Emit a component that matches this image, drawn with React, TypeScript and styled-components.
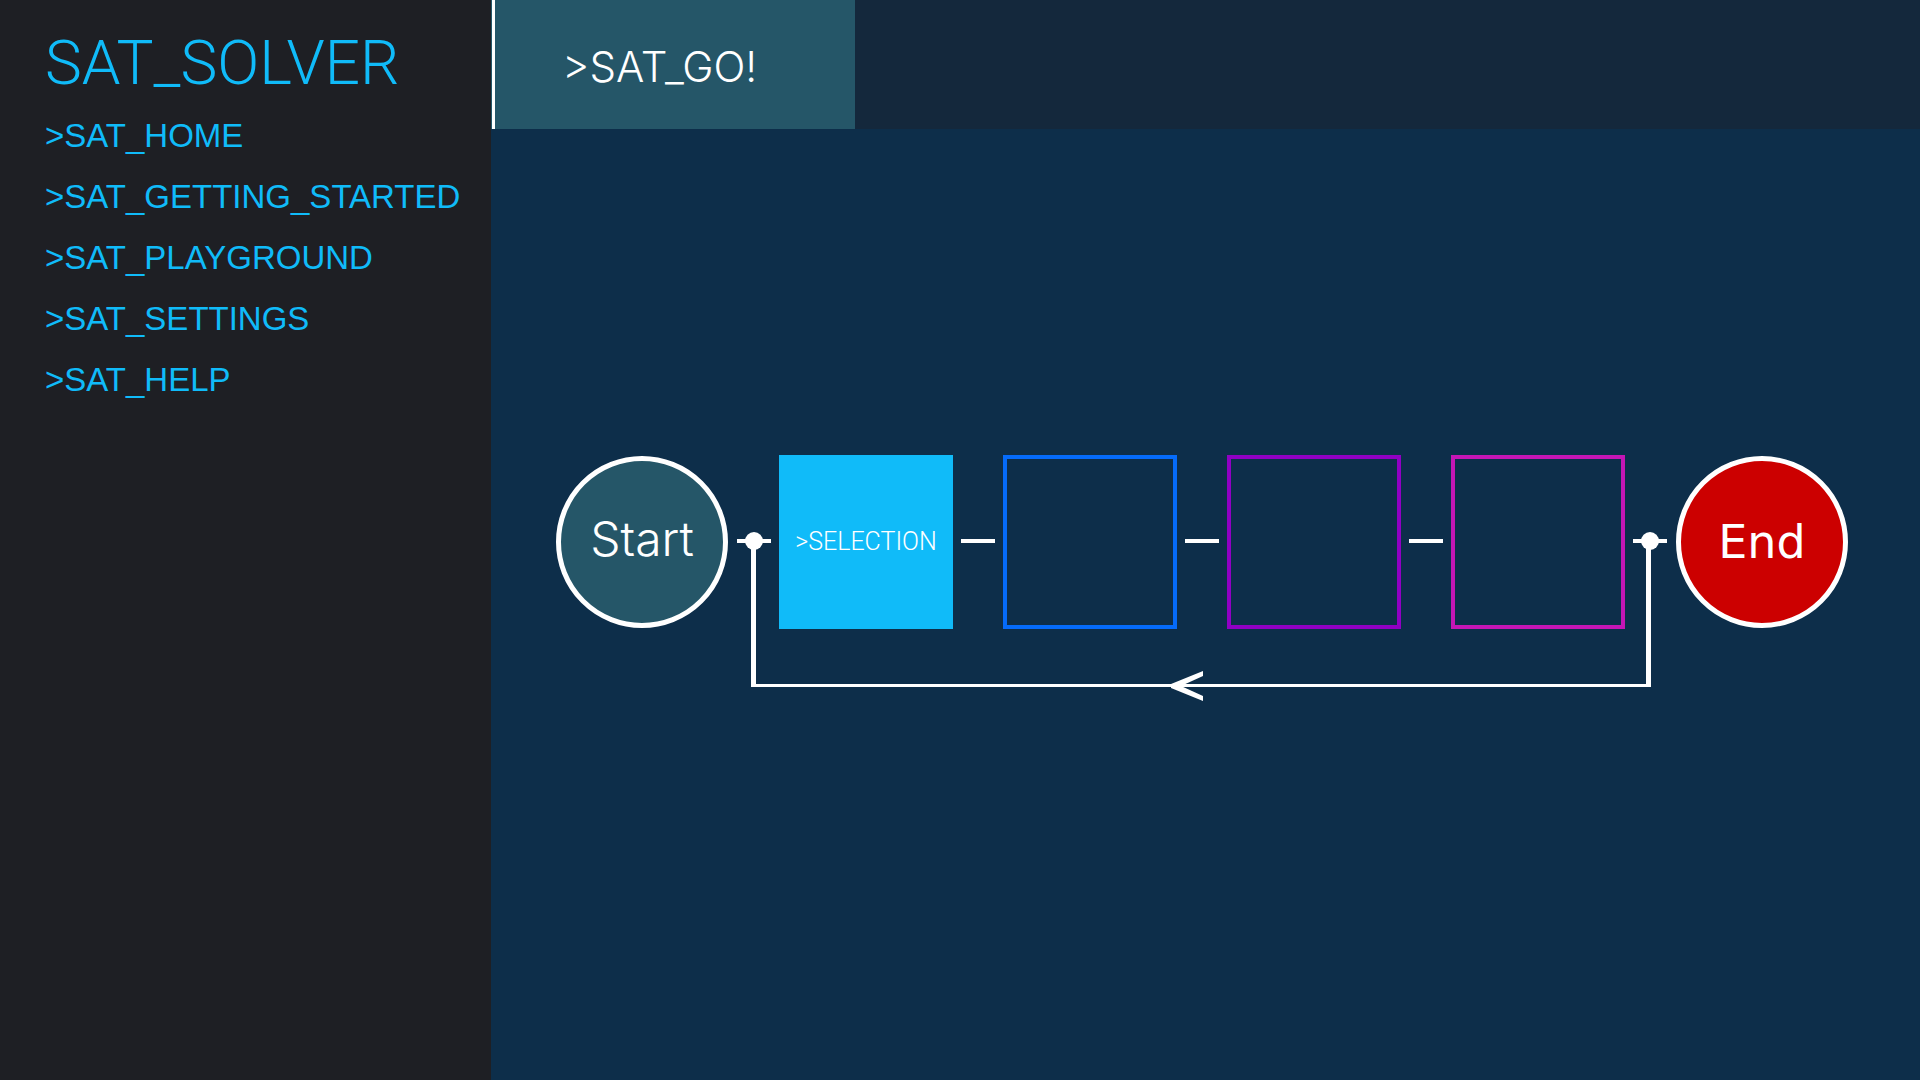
import React from "react";
import styled, { createGlobalStyle } from "styled-components";

const colors = {
  sidebar: "#1e1f24",
  header: "#14283c",
  canvas: "#0d2e4a",
  teal: "#255668",
  cyan: "#10bbf9",
  blue: "#056bfa",
  purple: "#9000c4",
  magenta: "#c516b5",
  red: "#cc0000",
  white: "#ffffff",
};

const GlobalStyle = createGlobalStyle`
  *, *::before, *::after { box-sizing: border-box; }
  body { margin: 0; background: ${colors.canvas}; }
  button { font: inherit; color: inherit; padding: 0; cursor: pointer; }
`;

const Page = styled.div`
  display: grid;
  grid-template-columns: 491px 1fr;
  min-height: 100vh;
  font-family: Roboto, "Liberation Sans", sans-serif;
  font-weight: 300;
`;

const Sidebar = styled.aside`
  background: ${colors.sidebar};
  color: ${colors.cyan};
  padding: 27px 0 0 45px;
`;

const Brand = styled.h1`
  margin: 0;
  font-size: 62px;
  line-height: 72px;
  font-weight: 300;
`;

const NavList = styled.ul`
  list-style: none;
  margin: 19px 0 0;
  padding: 0;
  display: flex;
  flex-direction: column;
  gap: 25px;
`;

const NavLink = styled.a`
  display: block;
  color: inherit;
  text-decoration: none;
  font-family: "Liberation Sans", Arial, sans-serif;
  font-size: 33px;
  line-height: 36px;
  white-space: nowrap;
`;

const Workspace = styled.main`
  display: flex;
  flex-direction: column;
  min-width: 0;
`;

const TabBar = styled.header`
  display: flex;
  height: 129px;
  background: ${colors.header};
`;

const Tab = styled.button`
  border: 0;
  border-left: 1px solid ${colors.teal};
  box-shadow: inset 3px 0 ${colors.white};
  background: ${colors.teal};
  color: ${colors.white};
  width: 364px;
  padding: 4px 0 0 70px;
  text-align: left;
  font-family: Inter, "Liberation Sans", sans-serif;
  font-size: 42px;
  line-height: 48px;
`;

const Canvas = styled.section`
  flex: 1;
  display: flex;
  justify-content: center;
  align-items: flex-start;
  padding: 326px 71px 0 64px;
`;

const Diagram = styled.div`
  display: grid;
  color: ${colors.white};
`;

const Steps = styled.div`
  grid-area: 1 / 1;
  display: flex;
  align-items: center;
  gap: 8px;
  height: 174px;
`;

const Slot = styled.button<{ $color: string; $filled?: boolean }>`
  width: 174px;
  height: 174px;
  border: 4px solid ${(p) => p.$color};
  background: ${(p) => (p.$filled ? p.$color : "transparent")};
  font-size: 25px;
  line-height: 28px;
`;

const Terminal = styled.button<{ $color: string }>`
  width: 172px;
  height: 172px;
  margin: 0 1px;
  border: 5px solid ${colors.white};
  border-radius: 50%;
  background: ${(p) => p.$color};
  line-height: 56px;
`;

const StartTerminal = styled(Terminal)`
  font-family: Inter, "Liberation Sans", sans-serif;
  font-size: 48px;
  padding-bottom: 6px;
`;

const EndTerminal = styled(Terminal)`
  font-family: "DejaVu Sans", Verdana, sans-serif;
  font-size: 46px;
  font-weight: 400;
`;

const Connector = styled.div`
  display: flex;
  align-items: center;
  justify-content: center;
  width: 34px;
  height: 4px;
  margin-bottom: 2px;
  background: ${colors.white};
`;

const Dot = styled.span`
  flex: none;
  width: 18px;
  height: 18px;
  border-radius: 50%;
  background: ${colors.white};
`;

const Loop = styled.div`
  grid-area: 1 / 1;
  position: relative;
  height: 146px;
  margin: 86px 198px 0 196px;
  border: solid ${colors.white};
  border-width: 0 5px 3px;
  pointer-events: none;
`;

const Arrow = styled.svg`
  position: absolute;
  left: 415px;
  bottom: -17px;
`;

const links = ["HOME", "GETTING_STARTED", "PLAYGROUND", "SETTINGS", "HELP"];

const slots = [
  { color: colors.cyan, name: "Selection", label: ">SELECTION" },
  { color: colors.blue, name: "Empty slot 2", label: "" },
  { color: colors.purple, name: "Empty slot 3", label: "" },
  { color: colors.magenta, name: "Empty slot 4", label: "" },
];

export default function App() {
  return (
    <>
      <GlobalStyle />
      <Page>
        <Sidebar>
          <Brand>SAT_SOLVER</Brand>
          <nav>
            <NavList>
              {links.map((name) => (
                <li key={name}>
                  <NavLink href={`#${name.toLowerCase()}`}>{`>SAT_${name}`}</NavLink>
                </li>
              ))}
            </NavList>
          </nav>
        </Sidebar>
        <Workspace>
          <TabBar>
            <Tab type="button">{">SAT_GO!"}</Tab>
          </TabBar>
          <Canvas>
            <Diagram>
              <Steps>
                <StartTerminal type="button" $color={colors.teal}>
                  Start
                </StartTerminal>
                <Connector>
                  <Dot />
                </Connector>
                {slots.map((slot, i) => (
                  <React.Fragment key={slot.name}>
                    <Slot
                      type="button"
                      aria-label={slot.name}
                      $color={slot.color}
                      $filled={i === 0}
                    >
                      {slot.label}
                    </Slot>
                    <Connector>{i === slots.length - 1 && <Dot />}</Connector>
                  </React.Fragment>
                ))}
                <EndTerminal type="button" $color={colors.red}>
                  End
                </EndTerminal>
              </Steps>
              <Loop>
                <Arrow width="32" height="30" viewBox="0 0 32 30" aria-hidden="true">
                  <path d="M32 0V5L10 15L32 25V30L0 17V13Z" fill={colors.white} />
                </Arrow>
              </Loop>
            </Diagram>
          </Canvas>
        </Workspace>
      </Page>
    </>
  );
}
